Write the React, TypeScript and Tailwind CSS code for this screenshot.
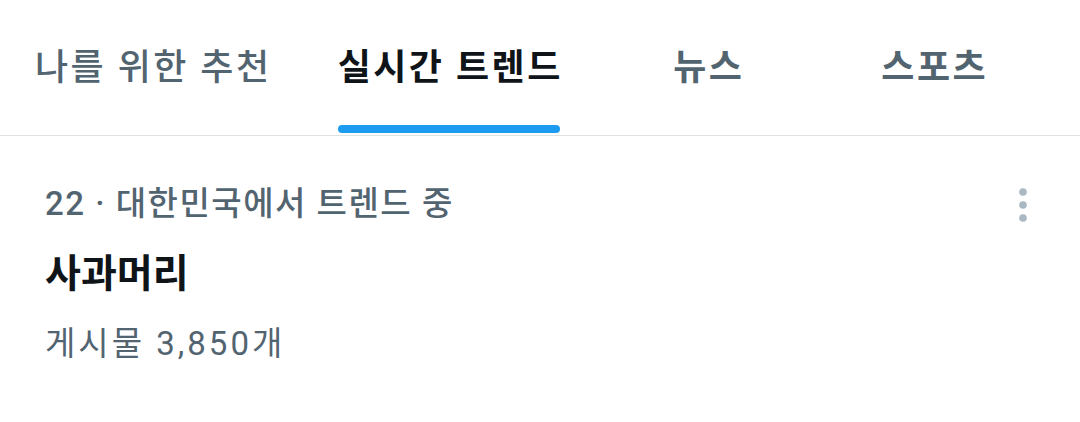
import React from 'react';

const tabs = [
  { label: '나를 위한 추천', active: false, weight: 'font-medium' },
  { label: '실시간 트렌드', active: true, weight: 'font-bold' },
  { label: '뉴스', active: false, weight: 'font-bold' },
  { label: '스포츠', active: false, weight: 'font-bold' },
];

function MoreIcon() {
  return (
    <svg width="12" height="38" viewBox="0 0 12 38" className="text-[#aab8c2]">
      <circle cx="6" cy="6" r="3.8" fill="currentColor" />
      <circle cx="6" cy="19" r="3.8" fill="currentColor" />
      <circle cx="6" cy="32" r="3.8" fill="currentColor" />
    </svg>
  );
}

export default function App() {
  return (
    <div
      className="w-[1080px] h-[422px] bg-white overflow-hidden"
      style={{ fontFamily: 'Roboto, "Noto Sans CJK KR", "Noto Sans", sans-serif' }}
    >
      <div className="flex h-[136px] pl-[3px] border-b border-[#dfe3e6]">
        {tabs.map((tab) => (
          <div
            key={tab.label}
            className="min-w-[226px] pl-[32px] pr-[34px] flex flex-col items-center justify-between"
          >
            <div className="flex-1 flex items-center pt-[10px]">
              <span
                className={`text-[36px] leading-none tracking-[2.5px] whitespace-nowrap ${tab.weight} ${
                  tab.active ? 'text-[#0f1419]' : 'text-[#536471]'
                }`}
              >
                {tab.label}
              </span>
            </div>
            <div
              className={`h-[8px] w-[calc(100%-3px)] self-start rounded-full mb-[2px] ${
                tab.active ? 'bg-[#1d9bf0]' : 'bg-transparent'
              }`}
            />
          </div>
        ))}
      </div>

      <div className="flex justify-between pl-[45px] pr-[51px] pt-[49px]">
        <div className="flex flex-col">
          <div className="text-[33px] leading-[38px] tracking-[1.5px] font-medium text-[#536471] whitespace-nowrap">
            22 · 대한민국에서 트렌드 중
          </div>
          <div className="mt-[30px] text-[39px] leading-[42px] font-bold text-[#0f1419]">
            사과머리
          </div>
          <div className="mt-[30px] text-[33px] leading-[38px] tracking-[3px] text-[#536471] whitespace-nowrap">
            게시물 3,850개
          </div>
        </div>
        <div className="pt-[1px]">
          <MoreIcon />
        </div>
      </div>
    </div>
  );
}
